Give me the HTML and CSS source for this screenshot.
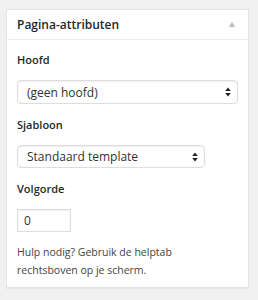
FILE: index.html
```html
<!DOCTYPE html>
<html lang="nl">
<head>
  <meta charset="UTF-8">
  <title>Pagina-attributen</title>
  <link rel="stylesheet" href="styles.css">
</head>
<body>

  <div class="postbox">
    <div class="postbox-header">
      <h2>Pagina-attributen</h2>
      <span class="toggle"></span>
    </div>
    <div class="inside">
      <p class="label">Hoofd</p>
      <div class="select select-wide">
        <span>(geen hoofd)</span>
        <svg class="arrows" width="6" height="10" viewBox="0 0 6 10">
          <path d="M3 0.5 L5.8 4 H0.2 Z M3 9.5 L5.8 6 H0.2 Z" fill="#222"/>
        </svg>
      </div>

      <p class="label">Sjabloon</p>
      <div class="select select-mid">
        <span>Standaard template</span>
        <svg class="arrows" width="6" height="10" viewBox="0 0 6 10">
          <path d="M3 0.5 L5.8 4 H0.2 Z M3 9.5 L5.8 6 H0.2 Z" fill="#222"/>
        </svg>
      </div>

      <p class="label">Volgorde</p>
      <div class="order">0</div>

      <p class="help">Hulp nodig? Gebruik de helptab<br>rechtsboven op je scherm.</p>
    </div>
  </div>

</body>
</html>
```

FILE: styles.css
```css
body {
  margin: 0;
  padding: 9px 9px 11px 6px;
  background-color: #f1f1f1;
  font-family: "Open Sans", Arial, sans-serif;
  color: #444;
}

.postbox {
  background: white;
  border: 1px solid #e5e5e5;
  box-shadow: 0 1px 1px rgba(0,0,0,0.04);
}

.postbox-header {
  display: flex;
  align-items: center;
  justify-content: space-between;
  height: 29px;
  padding: 0 13px 0 10px;
  border-bottom: 1px solid #eee;
}

h2 {
  margin: 0;
  font-size: 12px;
  font-weight: 600;
  color: #23282d;
}

.toggle {
  width: 0;
  height: 0;
  border-left: 3.5px solid transparent;
  border-right: 3.5px solid transparent;
  border-bottom: 5px solid #bbb;
}

.inside {
  padding: 12px 10px 8px 10px;
}

.label {
  margin: 0 0 12px;
  font-size: 11px;
  font-weight: 600;
  color: #23282d;
  line-height: 16px;
}

.select {
  display: flex;
  align-items: center;
  justify-content: space-between;
  box-sizing: border-box;
  height: 24px;
  padding: 0 6px 0 9px;
  border: 1px solid #ddd;
  border-radius: 4px;
  box-shadow: inset 0 1px 2px rgba(0,0,0,0.07);
  font-size: 12px;
  color: #333;
  margin-bottom: 13px;
}

.select-wide {
  width: 221px;
}

.select-mid {
  width: 188px;
  height: 23px;
}

.order {
  box-sizing: border-box;
  width: 54px;
  height: 23px;
  padding: 0 0 0 6px;
  border: 1px solid #ddd;
  box-shadow: inset 0 1px 2px rgba(0,0,0,0.07);
  font-size: 12px;
  line-height: 21px;
  color: #333;
}

.help {
  margin: 11px 0 0;
  font-size: 10.5px;
  line-height: 18px;
}
```
